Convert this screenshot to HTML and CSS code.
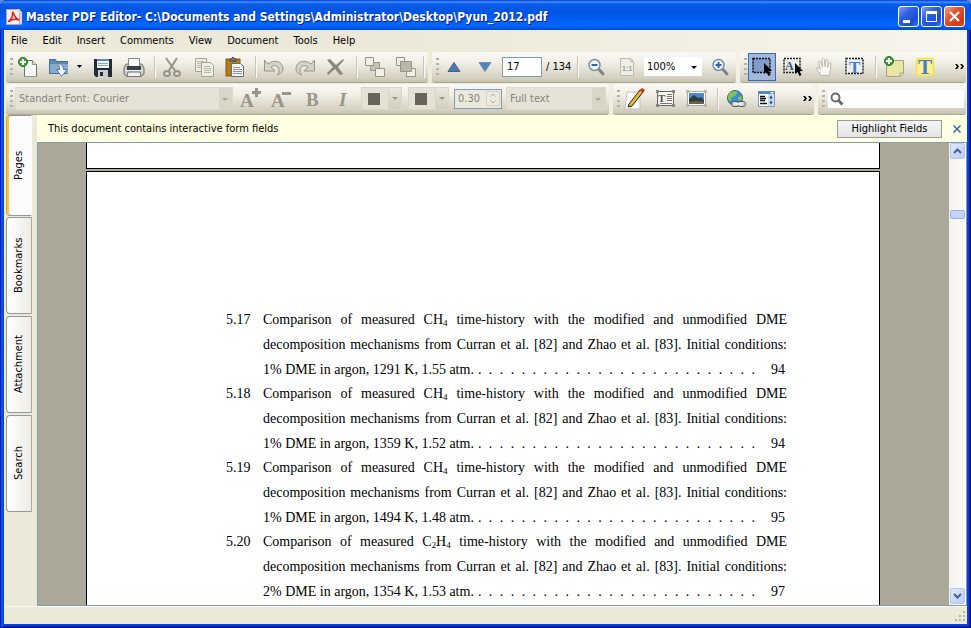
FILE: index.html
```html
<!DOCTYPE html>
<html lang="en">
<head>
<meta charset="utf-8">
<title>Master PDF Editor</title>
<link rel="stylesheet" href="styles.css">
</head>
<body>
<div class="window">
  <header class="titlebar">
    <svg class="app-icon" width="16" height="16" viewBox="0 0 16 16"><rect x=".5" y=".5" width="13" height="15" fill="#f4eeee" stroke="#b9a5a5"/><path d="M10 .5L14 4.500V15.500H16V3L13 0z" fill="#dcd3d3"/><path d="M6.500 2.500C8.500 7 9 9 13 11C9 9.500 6 10 2 13C5.500 9.500 7.500 7 6.500 2.500z" fill="#f5c8c0" stroke="#d8291c" stroke-width="1.500"/></svg>
    <h1>Master PDF Editor- C:\Documents and Settings\Administrator\Desktop\Pyun_2012.pdf</h1>
    <div class="window-buttons">
      <button class="wb" aria-label="Minimize"><svg width="19" height="19"><path d="M4 13h7v3H4z" fill="#fff"/></svg></button>
      <button class="wb" aria-label="Maximize"><svg width="19" height="19"><path d="M4 4h11v11H4zM5 7v7h9V7z" fill="#fff" fill-rule="evenodd"/></svg></button>
      <button class="wb close" aria-label="Close"><svg width="19" height="19"><path d="M5 5l9 9M14 5l-9 9" stroke="#fff" stroke-width="2.200"/></svg></button>
    </div>
  </header>

  <div class="client">
    <nav class="menubar">
      <button>File</button><button>Edit</button><button>Insert</button><button>Comments</button><button>View</button><button>Document</button><button>Tools</button><button>Help</button>
    </nav>

    <div class="toolbars">
      <div class="toolrow">
        <div class="toolbar">
          <i class="grip"></i>
          <button class="tb" aria-label="New"><svg width="24" height="24"><path d="M8.500 5.500h8l4 4v12h-12z" fill="#f8f8f6" stroke="#6f706c"/><path d="M16.500 5.500v4h4" fill="#ddd" stroke="#8d8e8a"/><path d="M9 21.500h12" stroke="#999"/><circle cx="7" cy="7" r="4.500" fill="#3fa03a" stroke="#1d751f"/><path d="M7 4v6M4 7h6" stroke="#fff" stroke-width="2"/></svg></button>
          <button class="tb" aria-label="Open"><svg width="24" height="24"><path d="M2.500 18.500v-14h6l1 2h11v12z" fill="#5b89b4" stroke="#426d98"/><path d="M3 9h18v9H3z" fill="#86abcb"/><path d="M10 8.500c4 0 6.500 2 6.500 6H20l-5.500 7-5-7h3c0-2.500-.5-5-2.500-6z" fill="#f1f6fa" stroke="#55799a"/></svg></button>
          <button class="tb drop" aria-label="Open recent"><svg width="5" height="3"><path d="M0 0h5L2.500 3z"/></svg></button>
          <button class="tb" aria-label="Save"><svg width="24" height="24"><path d="M3 4h18v18H5l-2-2z" fill="#252b32"/><path d="M6 4h12v9H6z" fill="#eef5fa"/><path d="M6 4h12v2H6z" fill="#5b8bb8"/><path d="M7 8.500h10M7 10.500h10" stroke="#93a5b2"/><path d="M7 15h10v7H7z" fill="#c9ced2"/><path d="M9 17h3v4H9z" fill="#252b32"/></svg></button>
          <button class="tb" aria-label="Print"><svg width="24" height="24"><path d="M4 9h16l2 4v6l-2 2H4l-2-2v-6z" fill="#c9c9c6" stroke="#6f6f6c"/><path d="M6.500 3.500h11v8h-11z" fill="#fafafa" stroke="#8a8a88"/><path d="M5 11h14v4H5z" fill="#3c3f42"/><path d="M3 15.500h18" stroke="#f0f0ee"/><path d="M6 17h12l1 4.500H5z" fill="#f1f1f1" stroke="#777"/></svg></button>
          <i class="sep"></i>
          <button class="tb" aria-label="Cut" disabled><svg width="24" height="24" fill="none" stroke="#96958b" stroke-width="2"><path d="M5 3l10 14M16 3L7 17"/><ellipse cx="6" cy="18.500" rx="3" ry="2.500"/><ellipse cx="16" cy="18.500" rx="3" ry="2.500"/></svg></button>
          <button class="tb" aria-label="Copy" disabled><svg width="24" height="24"><g fill="#efeee4" stroke="#a6a594"><path d="M3.500 3.500h11v13h-11z"/><path d="M9.500 7.500h9l3 3v11h-12z"/></g><path d="M5 6.500h7M5 8.500h4M5 10.500h4M5 12.500h4M12 11.500h6M12 13.500h7M12 15.500h7M12 17.500h7" stroke="#b9b8a8"/></svg></button>
          <button class="tb" aria-label="Paste"><svg width="24" height="24"><path d="M3 4h14v17H3z" fill="#b57b17" stroke="#8a590d"/><path d="M7 6V4h1l2-2 2 2h1v2z" fill="#777" stroke="#494949"/><path d="M8.500 8.500h9l3 3v10h-12z" fill="#f5f6f7" stroke="#667077"/><path d="M10 12.500h7M10 14.500h9M10 16.500h9M10 18.500h9" stroke="#8c9298"/></svg></button>
          <i class="sep"></i>
          <button class="tb" aria-label="Undo" disabled><svg width="24" height="24"><path d="M2.500 5v11H13l-4-4c4-3 9-1 8 5 0 1-1 2-2 3 4-1 6-3 6-6 0-8-9-10-15-5z" fill="#d5d3c5" stroke="#97968b"/></svg></button>
          <button class="tb" aria-label="Redo" disabled><svg width="24" height="24"><path d="M21.500 5v11H11l4-4c-4-3-9-1-8 5 0 1 1 2 2 3-4-1-6-3-6-6 0-8 9-10 15-5z" fill="#d5d3c5" stroke="#97968b"/></svg></button>
          <button class="tb" aria-label="Delete" disabled><svg width="24" height="24"><path d="M3 5l3-1 6 6 7-6 1 1-6 7 5 7-3 1-5-6-7 6-1-2 6-6z" fill="#89887f"/></svg></button>
          <i class="sep"></i>
          <button class="tb" aria-label="Bring to front" disabled><svg width="24" height="24" fill="#f1f0e6" stroke="#96958a"><path d="M7.500 7.500h9v8h-9z" fill="#c5c3b4"/><path d="M2.500 2.500h8v8h-8zM12.500 13.500h9v8h-9z"/></svg></button>
          <button class="tb" aria-label="Send to back" disabled><svg width="24" height="24" fill="#f1f0e6" stroke="#96958a"><path d="M2.500 2.500h8v8h-8zM12.500 13.500h9v8h-9z"/><path d="M6.500 6.500h11v10h-11z" fill="#bab8a9"/></svg></button>
          <i class="sep end"></i>
        </div>
        <div class="toolbar">
          <i class="grip"></i>
          <button class="tb" aria-label="Previous page"><svg width="24" height="24"><path d="M12 7.500l6 9H6z" fill="#5078ab" stroke="#3c6193"/></svg></button>
          <button class="tb" aria-label="Next page"><svg width="24" height="24"><path d="M12 16.500l6-9H6z" fill="#5782b8" stroke="#6d91bd"/></svg></button>
          <input class="field page-no" id="page" value="17" aria-label="Page"><label class="page-total" for="page">/ 134</label>
          <i class="sep"></i>
          <button class="tb" aria-label="Zoom out"><svg width="24" height="24"><path d="M15 14.500l4 4.500" stroke="#7e828a" stroke-width="3" stroke-linecap="round"/><circle cx="10.500" cy="10" r="5.500" fill="#f3f8fd" stroke="#7790ad" stroke-width="1.500"/><path d="M7.500 10h6" stroke="#2f61b0" stroke-width="2"/></svg></button>
          <button class="tb" aria-label="Actual size" disabled><svg width="24" height="24"><path d="M5.500 3.500h10l3 3v14h-13z" fill="#efeee5" stroke="#bdbbae"/><path d="M15.500 3.500v3h3" fill="none" stroke="#bdbbae"/><text x="7" y="16" class="tiny">1:1</text></svg></button>
          <span class="combo zoom"><select aria-label="Zoom"><option>100%</option></select></span>
          <button class="tb" aria-label="Zoom in"><svg width="24" height="24"><path d="M15 14.500l4 4.500" stroke="#7e828a" stroke-width="3" stroke-linecap="round"/><circle cx="10.500" cy="10" r="5.500" fill="#f3f8fd" stroke="#7790ad" stroke-width="1.500"/><path d="M7.500 10h6M10.500 7v6" stroke="#2f61b0" stroke-width="2"/></svg></button>
        </div>
        <div class="toolbar grow">
          <i class="grip"></i>
          <button class="tb active" aria-label="Select objects"><svg width="24" height="24"><rect x="3" y="3.500" width="17" height="14" fill="#7f9ccb" stroke="#111" stroke-width="1.500" stroke-dasharray="2 1"/><path d="M14 8v11l2.500-2 2 4 2-1-2-4h3.500z"/></svg></button>
          <button class="tb" aria-label="Select text"><svg width="24" height="24"><rect x="3" y="3.500" width="16" height="14" fill="none" stroke="#222" stroke-width="1.500" stroke-dasharray="2 1"/><text x="4" y="15" class="glyph-a">A</text><path d="M14 8v11l2.500-2 2 4 2-1-2-4h3.500z"/></svg></button>
          <button class="tb" aria-label="Hand" disabled><svg width="24" height="24"><path d="M9 20.500c-1-3-3.500-4.500-4.500-7.500 1.500-1 3 0 4 1.500L6.500 7c.5-1.500 2-1 2.500.5l1.500 4.500L10 4.500c.5-1.500 2-1 2.500 0l.5 7 1-6.500c1-1 2-.5 2 1l-.5 6.500L17.500 8c1-.5 2 .5 1.500 2-1 4-.5 7.500-2.500 10.500z" fill="#faf9f3" stroke="#b9b7aa"/></svg></button>
          <button class="tb" aria-label="Edit text"><svg width="24" height="24"><rect x="3" y="3.500" width="17" height="15" fill="#e9eef5" stroke="#222" stroke-width="1.500" stroke-dasharray="2 1"/><text x="6" y="18" class="glyph-t">T</text></svg></button>
          <i class="sep"></i>
          <button class="tb" aria-label="Add note"><svg width="24" height="24"><path d="M4.500 5.500h17v13l-3 3h-14z" fill="#e9e5a8" stroke="#a8a46a"/><path d="M18 21v-3h3" fill="#fff" stroke="#a8a46a"/><circle cx="7" cy="6" r="4.500" fill="#3fa03a" stroke="#1d751f"/><path d="M7 3v6M4 6h6" stroke="#fff" stroke-width="2"/></svg></button>
          <button class="tb" aria-label="Highlight text"><svg width="24" height="24"><rect x="3.500" y="3.500" width="17" height="17" rx="3" fill="#f8f197" stroke="#f1e65b" stroke-width="2"/><text x="5" y="19" class="glyph-t big">T</text></svg></button>
          <button class="more" aria-label="More"><svg width="9" height="5"><path d="M0 0h2l2 2.500L2 5H0l2-2.500zM5 0h2l2 2.500L7 5H5l2-2.500z"/></svg></button>
        </div>
      </div>

      <div class="toolrow">
        <div class="toolbar">
          <i class="grip"></i>
          <span class="combo font off"><select aria-label="Font" disabled><option>Standart Font: Courier</option></select></span>
          <button class="tb" aria-label="Larger font" disabled><svg width="24" height="24"><text x="1" y="20" class="letter">A</text><path d="M16 1h3v3h3v3h-3v3h-3V7h-3V4h3z" fill="#98968b"/></svg></button>
          <button class="tb" aria-label="Smaller font" disabled><svg width="24" height="24"><text x="1" y="20" class="letter">A</text><path d="M12 5h9v3h-9z" fill="#98968b"/></svg></button>
          <button class="tb" aria-label="Bold" disabled><svg width="24" height="24"><text x="5" y="19" class="letter">B</text></svg></button>
          <button class="tb" aria-label="Italic" disabled><svg width="24" height="24"><text x="7" y="19" class="letter slant">I</text></svg></button>
          <button class="swatch" aria-label="Fill color" disabled><i class="chip"></i><i class="arrow"></i></button>
          <button class="swatch" aria-label="Stroke color" disabled><i class="chip"></i><i class="arrow"></i></button>
          <span class="spin"><input value="0.30" aria-label="Line width" disabled><svg width="14" height="15"><path d="M.5.5h13v14H.5z" fill="#edebe0" stroke="#d5d2c4"/><path d="M4.500 5.500L7 3l2.500 2.500M4.500 9.500L7 12l2.500-2.500" fill="none" stroke="#aaa89c"/></svg></span>
          <span class="combo fit off"><select aria-label="Text mode" disabled><option>Full text</option></select></span>
        </div>
        <div class="toolbar second">
          <i class="grip"></i>
          <button class="tb" aria-label="Draw"><svg width="24" height="24"><path d="M4 5h13v17H2z" fill="#fafafa" stroke="#c5c4ba"/><path d="M6 17L17 3l3 2L9 19l-4 1z" fill="#e8b630" stroke="#252525"/><path d="M17 3l2-2 3 2-2 3z" fill="#cf3318"/></svg></button>
          <button class="tb" aria-label="Text box"><svg width="24" height="24"><path d="M3.500 4.500h16v14h-16z" fill="#f5f4ee" stroke="#66675f"/><text x="4" y="15" class="box-t">T</text><path d="M13 7.500h5M13 9.500h5M13 11.500h5M13 13.500h5M6 16.500h12" stroke="#77786f"/><path d="M2 3h3v3H2zM18 3h3v3h-3zM2 17h3v3H2zM18 17h3v3h-3z" fill="#85867d"/></svg></button>
          <button class="tb" aria-label="Image"><svg width="24" height="24"><path d="M2.500 4.500h18v14h-18z" fill="#fff" stroke="#aaa"/><path d="M4 6h15v11H4z" fill="#4c87d0"/><path d="M4 12l5-4 4 3 3-1 3 3v4H4z" fill="#303c46"/><path d="M4 15l7-1 8 1v2H4z" fill="#71623c"/><path d="M1 3h3v3H1zM19 3h3v3h-3zM1 17h3v3H1zM19 17h3v3h-3z" fill="#bbb9ab"/></svg></button>
          <i class="sep"></i>
          <button class="tb" aria-label="Link"><svg width="24" height="24"><circle cx="11" cy="11" r="7.500" fill="#3a8fd4" stroke="#22619b"/><path d="M5 7c3-4 7-3 9-2l-3 4-3 1-2 5c-2-2-3-5-1-8zM14 10l4-1v4h-4z" fill="#7fc450"/><g fill="#d8d8d5" stroke="#5a5a57"><rect x="7.500" y="14.500" width="8" height="5" rx="2.500"/><rect x="13.500" y="14.500" width="8" height="5" rx="2.500"/></g><path d="M11 17h7" stroke="#eee" stroke-width="2"/></svg></button>
          <button class="tb" aria-label="List box"><svg width="24" height="24"><path d="M3.500 4.500h16v15h-16z" fill="#fff" stroke="#7b9cc0"/><path d="M3 4h17v3H3z" fill="#5b87b7"/><path d="M15 5h4l-2 2z" fill="#fff"/><path d="M5 9.500h5M5 11.500h6M5 13.500h5M5 16.500h7" stroke="#111" stroke-width="1.500"/><path d="M13 7h6v12h-6z" fill="#c9dcf1"/><path d="M16 8.500l1.500 2-1.500 2-1.500-2zM16 13.500l1.500 2-1.500 2-1.500-2z" fill="#31567f"/></svg></button>
          <button class="more" aria-label="More"><svg width="9" height="5"><path d="M0 0h2l2 2.500L2 5H0l2-2.500zM5 0h2l2 2.500L7 5H5l2-2.500z"/></svg></button>
        </div>
        <div class="toolbar grow">
          <i class="grip"></i>
          <label class="search"><svg width="14" height="14" fill="none" stroke="#6b6b69" stroke-width="2"><circle cx="5.500" cy="5.500" r="4"/><path d="M8.500 8.500l4 4" stroke-width="3"/></svg><input type="search" aria-label="Search"></label>
        </div>
      </div>
    </div>

    <div class="body">
      <aside class="tabs">
        <button class="tab selected">Pages</button>
        <button class="tab">Bookmarks</button>
        <button class="tab">Attachment</button>
        <button class="tab">Search</button>
      </aside>
      <main class="main">
        <div class="notice">
          <span>This document contains interactive form fields</span>
          <button class="push">Highlight Fields</button>
          <button class="dismiss" aria-label="Dismiss"><svg width="8" height="8"><path d="M.5.5l7 7M7.500.5l-7 7" stroke="#3f62b0" stroke-width="1.500"/></svg></button>
        </div>
        <div class="viewer">
          <div class="canvas">
            <div class="page previous"></div>
            <div class="page">
              <ol class="figures">
                <li><span>5.17</span><div>
                  <p class="full">Comparison of measured CH<sub>4</sub> time-history with the modified and unmodified DME</p>
                  <p class="full">decomposition mechanisms from Curran et al. [82] and Zhao et al. [83]. Initial conditions:</p>
                  <p class="last"><span>1% DME in argon, 1291 K, 1.55 atm.</span><span class="dots">. . . . . . . . . . . . . . . . . . . . . . . . . .</span><span class="num">94</span></p></div></li>
                <li><span>5.18</span><div>
                  <p class="full">Comparison of measured CH<sub>4</sub> time-history with the modified and unmodified DME</p>
                  <p class="full">decomposition mechanisms from Curran et al. [82] and Zhao et al. [83]. Initial conditions:</p>
                  <p class="last"><span>1% DME in argon, 1359 K, 1.52 atm.</span><span class="dots">. . . . . . . . . . . . . . . . . . . . . . . . . .</span><span class="num">94</span></p></div></li>
                <li><span>5.19</span><div>
                  <p class="full">Comparison of measured CH<sub>4</sub> time-history with the modified and unmodified DME</p>
                  <p class="full">decomposition mechanisms from Curran et al. [82] and Zhao et al. [83]. Initial conditions:</p>
                  <p class="last"><span>1% DME in argon, 1494 K, 1.48 atm.</span><span class="dots">. . . . . . . . . . . . . . . . . . . . . . . . . .</span><span class="num">95</span></p></div></li>
                <li><span>5.20</span><div>
                  <p class="full">Comparison of measured C<sub>2</sub>H<sub>4</sub> time-history with the modified and unmodified DME</p>
                  <p class="full">decomposition mechanisms from Curran et al. [82] and Zhao et al. [83]. Initial conditions:</p>
                  <p class="last"><span>2% DME in argon, 1354 K, 1.53 atm.</span><span class="dots">. . . . . . . . . . . . . . . . . . . . . . . . . .</span><span class="num">97</span></p></div></li>
              </ol>
            </div>
          </div>
          <div class="scrollbar">
            <button aria-label="Scroll up"><svg width="9" height="6"><path d="M1 5l3.500-3.500L8 5" fill="none" stroke="#4d6185" stroke-width="2"/></svg></button>
            <div class="track"><i class="thumb"></i></div>
            <button aria-label="Scroll down"><svg width="9" height="6"><path d="M1 1l3.500 3.500L8 1" fill="none" stroke="#4d6185" stroke-width="2"/></svg></button>
          </div>
        </div>
      </main>
    </div>
    <footer class="status"><svg width="11" height="11" fill="#b8b4a3"><path d="M8 0h2v2H8zM4 4h2v2H4zM8 4h2v2H8zM0 8h2v2H0zM4 8h2v2H4zM8 8h2v2H8z"/></svg></footer>
  </div>
</div>
</body>
</html>
```

FILE: styles.css
```css
* { box-sizing: border-box; }
body {
  margin: 0;
  background: #6b8fe0;
  color: #000;
  font: 11px/14px "DejaVu Sans Condensed", "Liberation Sans", sans-serif;
}
button, input, select { font: inherit; color: inherit; margin: 0; padding: 0; border: 0; background: none; }
svg { display: block; flex: none; }
i { display: block; flex: none; }

.window {
  display: flex;
  flex-direction: column;
  height: 100vh;
  padding: 0 4px 4px;
  border-radius: 7px 7px 0 0;
  background: #0543dc;
  box-shadow: inset 1px 0 #0019cf, inset -1px -1px #00138c, inset 3px 0 #0855dd, inset -2px -2px #001ea0;
  overflow: hidden;
}
.titlebar {
  display: flex;
  align-items: center;
  height: 30px;
  margin: 0 -4px;
  padding: 3px 6px 0;
  background: linear-gradient(#0831d9 0, #3a93ff 2px, #0a5be8 4px, #0054e3 12px, #0062fb 22px, #0066ff 26px, #0048d0 30px);
}
.titlebar h1 {
  flex: 1;
  margin: 0 0 0 4px;
  color: #fff;
  font: bold 12px/18px "DejaVu Sans Condensed", "Open Sans", sans-serif;
  text-shadow: 1px 1px #0a1883;
  white-space: nowrap;
}
.window-buttons { display: flex; gap: 2px; }
.wb {
  width: 21px;
  height: 21px;
  border: 1px solid #fff;
  border-radius: 3px;
  background: linear-gradient(135deg, #7ea0f3, #2a5ee0 40%, #1c4fd4 75%, #3a74f0);
}
.wb.close { background: linear-gradient(135deg, #f0a08a, #e25330 40%, #cf3a14 80%, #d8552f); }

.client { flex: 1; min-height: 0; display: flex; flex-direction: column; background: #ece9d8; }
.menubar { display: flex; gap: 15px; padding: 3px 7px; background: linear-gradient(90deg, #ece9d8 40%, #f7f5ec); }
.menubar button { height: 15px; }

.toolbars { display: flex; flex-direction: column; gap: 1px; padding: 1px 1px 0 2px; background: linear-gradient(90deg, #ece9d8 40%, #f7f5ec); }
.toolrow { display: flex; gap: 4px; }
.toolbar {
  display: flex;
  align-items: center;
  height: 31px;
  padding: 0 2px 1px 0;
  border-radius: 3px;
  border-bottom: 1px solid #aaa693;
  background: linear-gradient(#faf9f5, #f1efe6 35%, #d5d2c3 85%, #c6c2b1);
}
.toolbar.grow { flex: 1; min-width: 0; }
.toolbar.second { width: 201px; }
.grip {
  width: 3px;
  height: 17px;
  margin: 0 1px 0 4px;
  background: repeating-linear-gradient(#b5b2a2 0 2px, transparent 2px 5px);
}
.tb { display: flex; align-items: center; justify-content: center; flex: none; width: 28px; height: 28px; margin-right: 3px; }
.tb:last-child { margin-right: 0; }
.tb.active { border: 1px solid #316ac5; background: #a2b8dd; }
.tb.drop { width: 13px; margin-left: -3px; }
.sep { width: 1px; height: 22px; margin: 0 3px 0 4px; background: #fbfaf5; box-shadow: -1px 0 #c9c5b4; }
.sep.end { margin: 0 1px; }
.more { margin-left: auto; padding: 6px 0; }
.field { height: 20px; padding: 0 4px; border: 1px solid #7f9db9; background: #fff; }
.page-no { width: 40px; }
.page-total { width: 32px; padding-left: 4px; white-space: nowrap; }

.combo { position: relative; display: flex; margin-right: 4px; }
.combo select { width: 100%; height: 19px; padding: 0 3px; appearance: none; background: #fff; }
.combo::after {
  content: "";
  position: absolute;
  right: 5px;
  top: 50%;
  margin-top: -1px;
  border: solid transparent;
  border-width: 3px 3px 0;
  border-top-color: #000;
}
.zoom { width: 58px; }
.off select { height: 23px; padding: 0 3px; border: 1px solid #dedbcd; color: #85837a; opacity: 1; background: linear-gradient(90deg, #e5e3d8 calc(100% - 13px), #d9d6c7 0); }
.off::after { border-top-color: #aaa89b; }
.font { width: 218px; margin-left: 1px; }
.fit { width: 100px; margin-right: 1px; }
.swatch { display: flex; align-items: center; width: 41px; height: 23px; margin-right: 6px; border: 1px solid #dad7c8; background: #e5e2d3; }
.swatch + .spin { margin-left: -1px; }
.chip { width: 12px; height: 12px; margin-left: 6px; background: #66655b; }
.arrow { flex: 1; align-self: stretch; margin-left: 8px; border-left: 1px solid #dad7c8; background: linear-gradient(#e9e7dc, #d2cfc0); position: relative; }
.arrow::after { content: ""; position: absolute; left: 3px; top: 9px; border: solid transparent; border-width: 3px 3px 0; border-top-color: #99978b; }
.spin { display: flex; align-items: center; width: 48px; height: 20px; margin-right: 4px; padding: 0 1px 0 3px; border: 1px solid #7f9db9; background: #ebe9dc; }
.spin input { flex: 1; min-width: 0; color: #85837a; }
.search { flex: 1; min-width: 0; display: flex; align-items: center; height: 18px; margin-left: 2px; padding-left: 2px; background: #fff; }
.search input { flex: 1; min-width: 0; outline: 0; appearance: none; }

.tiny { font: bold 7px "Liberation Sans", sans-serif; fill: #9b998d; }
.glyph-a { font: bold 12px "Liberation Serif", serif; fill: #30568a; }
.glyph-t { font: bold 17px "Liberation Serif", serif; fill: #4b7ac0; }
.glyph-t.big { font-size: 21px; }
.box-t { font: bold 11px "Liberation Serif", serif; fill: #55564f; }
.letter { font: bold 19px "Liberation Serif", serif; fill: #98968b; }
.slant { font-style: italic; }

.body { flex: 1; min-height: 0; display: flex; }
.tabs { display: flex; flex-direction: column; gap: 2px; flex: none; width: 33px; padding: 0 5px 0 2px; }
.tab {
  width: 26px;
  height: 97px;
  border: 1px solid #919b9c;
  border-left-color: #aca899;
  border-radius: 0 4px 4px 0;
  background: linear-gradient(270deg, #fff, #ecebe6);
  writing-mode: vertical-rl;
  transform: rotate(180deg);
}
.tab.selected { height: 101px; margin-bottom: -1px; border-left-color: #fcfcfe; border-right-color: #e5972d; box-shadow: inset -2px 0 #ffc73c; background: #fcfcfe; }

.main { flex: 1; min-width: 0; display: flex; flex-direction: column; }
.notice { display: flex; align-items: center; height: 27px; padding: 0 6px 0 11px; background: #ffffe1; }
.notice span { flex: 1; }
.push { width: 105px; height: 18px; border: 1px solid #9a9a9a; background: linear-gradient(#f5f5f5, #e4e4e4); }
.dismiss { margin-left: 11px; padding: 5px 0; }
.viewer { flex: 1; min-height: 0; display: flex; border: 1px solid #7f9db9; background: #aca899; }
.canvas { flex: 1; min-width: 0; padding: 0 69px 0 48px; overflow: hidden; }
.page { margin-top: 2px; padding: 135px 92px 0 139px; border: 1px solid #000; background: #fff; min-height: 1000px; font: 14px/25px "Liberation Serif", serif; }
.page.previous { min-height: 26px; height: 26px; margin: 0; padding: 0; border-top: 0; }
.figures { margin: 0; padding: 0; list-style: none; }
.figures li { display: grid; grid-template-columns: 37px 1fr; margin-bottom: -1px; }
.figures p { margin: 0; white-space: nowrap; }
.full { text-align: justify; text-align-last: justify; }
.figures p.full { white-space: normal; }
.figures sub { font-size: 9px; line-height: 0; vertical-align: -2px; }
.last { display: flex; }
.dots { flex: 1; margin: 0 16px 0 4px; text-align-last: justify; }
.figures .dots { white-space: normal; }
.num { margin-right: 2px; }

.scrollbar { display: flex; flex-direction: column; flex: none; width: 17px; padding: 0 1px 1px; background: linear-gradient(90deg, #f3f1ec, #fefefb); }
.scrollbar button {
  display: flex;
  align-items: center;
  justify-content: center;
  height: 16px;
  border: 1px solid #b2c5f5;
  border-radius: 2px;
  background: linear-gradient(135deg, #dfe8fe, #b9cbf8);
}
.track { flex: 1; padding-top: 51px; }
.thumb { height: 9px; border: 1px solid #98b0e8; border-radius: 2px; background: #c2d3fc; }
.status { display: flex; align-items: flex-end; justify-content: flex-end; height: 18px; padding: 2px 1px; border-top: 1px solid #faf9f4; }
```
